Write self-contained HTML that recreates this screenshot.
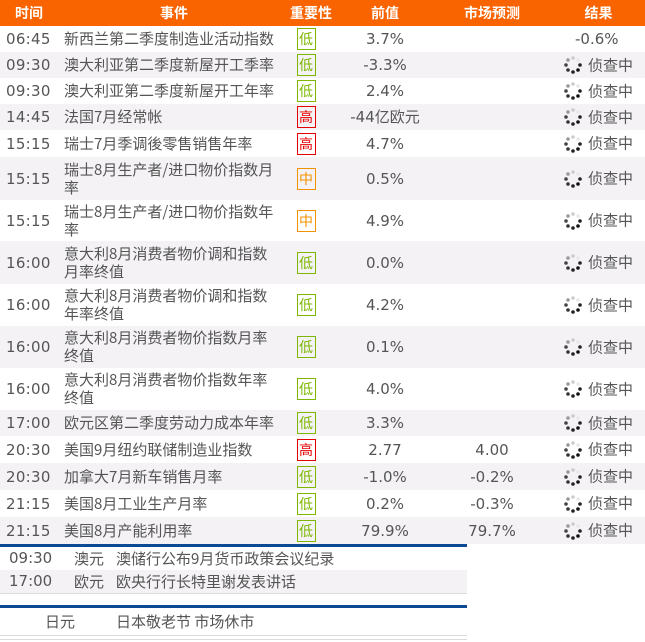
<!DOCTYPE html>
<html><head><meta charset="utf-8"><style>
body{margin:0;width:645px;height:642px;background:#fff;overflow:hidden;font-family:"DejaVu Sans","Liberation Sans","Noto Sans CJK SC",sans-serif;color:#555;}
table{border-collapse:collapse;table-layout:fixed;width:645px;}
td{padding:0;font-size:15px;line-height:18px;vertical-align:middle;overflow:hidden}
th{background:#f96300;color:#fff;font-weight:bold;font-size:14px;height:26px;line-height:26px;padding:0;white-space:nowrap;overflow:visible;font-family:"Noto Sans CJK SC",sans-serif;}
tr.g td{background:#f4f2f5;}
td.t{padding-left:6px;font-size:15px;letter-spacing:0.3px;white-space:nowrap}
td.e{padding-left:6px;padding-right:11px;font-family:"Noto Sans CJK SC",sans-serif;font-size:15px;line-height:18px}
td.i{text-align:center;}
td.p,td.f{text-align:center;white-space:nowrap}
td.r{padding-left:28px;white-space:nowrap}
.b{display:inline-block;width:17px;height:20px;line-height:20px;border:1px solid #7db700;color:#7db700;font-size:14px;text-align:center;font-family:"Noto Sans CJK SC",sans-serif;vertical-align:middle}
.b.h{border-color:#e60000;color:#e60000}
.b.m{border-color:#f39200;color:#f39200}
.sp{display:inline-block;vertical-align:middle;width:18px;height:18px;margin-right:6px}
.z{font-family:"Noto Sans CJK SC",sans-serif;font-size:15px;vertical-align:middle}
.lo{position:absolute;left:0;width:467px;font-size:15px;}
.lo div{height:23px;line-height:23px;position:relative}
.lo span{position:absolute;white-space:nowrap}
</style></head><body>
<svg width="0" height="0" style="position:absolute"><defs><g id="s">
<circle cx="9" cy="2" r="1.8" fill="#ccc"/><circle cx="14" cy="4" r="1.8" fill="#e8e8e8"/>
<circle cx="16" cy="9" r="1.8" fill="#222"/><circle cx="14" cy="14" r="1.8" fill="#111"/>
<circle cx="9" cy="16" r="1.8" fill="#222"/><circle cx="4" cy="14" r="1.8" fill="#333"/>
<circle cx="2" cy="9" r="1.8" fill="#444"/><circle cx="4" cy="4" r="1.8" fill="#999"/></g></defs></svg>
<table>
<colgroup><col style="width:58px"><col style="width:232px"><col style="width:32px"><col style="width:126px"><col style="width:88px"><col style="width:109px"></colgroup>
<tr style="height:26px"><th>时间</th><th>事件</th><th>重要性</th><th>前值</th><th>市场预测</th><th style="padding-left:16px">结果</th></tr>
<tr style="height:26px"><td class="t">06:45</td><td class="e">新西兰第二季度制造业活动指数</td><td class="i"><span class="b">低</span></td><td class="p">3.7%</td><td class="f"></td><td class="r" style="padding-left:39px">-0.6%</td></tr>
<tr class="g" style="height:26px"><td class="t">09:30</td><td class="e">澳大利亚第二季度新屋开工季率</td><td class="i"><span class="b">低</span></td><td class="p">-3.3%</td><td class="f"></td><td class="r"><svg class="sp"><use href="#s"/></svg><span class="z">侦查中</span></td></tr>
<tr style="height:26px"><td class="t">09:30</td><td class="e">澳大利亚第二季度新屋开工年率</td><td class="i"><span class="b">低</span></td><td class="p">2.4%</td><td class="f"></td><td class="r"><svg class="sp"><use href="#s"/></svg><span class="z">侦查中</span></td></tr>
<tr class="g" style="height:26px"><td class="t">14:45</td><td class="e">法国7月经常帐</td><td class="i"><span class="b h">高</span></td><td class="p">-44亿欧元</td><td class="f"></td><td class="r"><svg class="sp"><use href="#s"/></svg><span class="z">侦查中</span></td></tr>
<tr style="height:27px"><td class="t">15:15</td><td class="e">瑞士7月季调後零售销售年率</td><td class="i"><span class="b h">高</span></td><td class="p">4.7%</td><td class="f"></td><td class="r"><svg class="sp"><use href="#s"/></svg><span class="z">侦查中</span></td></tr>
<tr class="g" style="height:43px"><td class="t">15:15</td><td class="e">瑞士8月生产者/进口物价指数月率</td><td class="i"><span class="b m">中</span></td><td class="p">0.5%</td><td class="f"></td><td class="r"><svg class="sp"><use href="#s"/></svg><span class="z">侦查中</span></td></tr>
<tr style="height:41px"><td class="t">15:15</td><td class="e">瑞士8月生产者/进口物价指数年率</td><td class="i"><span class="b m">中</span></td><td class="p">4.9%</td><td class="f"></td><td class="r"><svg class="sp"><use href="#s"/></svg><span class="z">侦查中</span></td></tr>
<tr class="g" style="height:43px"><td class="t">16:00</td><td class="e">意大利8月消费者物价调和指数月率终值</td><td class="i"><span class="b">低</span></td><td class="p">0.0%</td><td class="f"></td><td class="r"><svg class="sp"><use href="#s"/></svg><span class="z">侦查中</span></td></tr>
<tr style="height:42px"><td class="t">16:00</td><td class="e">意大利8月消费者物价调和指数年率终值</td><td class="i"><span class="b">低</span></td><td class="p">4.2%</td><td class="f"></td><td class="r"><svg class="sp"><use href="#s"/></svg><span class="z">侦查中</span></td></tr>
<tr class="g" style="height:42px"><td class="t">16:00</td><td class="e">意大利8月消费者物价指数月率终值</td><td class="i"><span class="b">低</span></td><td class="p">0.1%</td><td class="f"></td><td class="r"><svg class="sp"><use href="#s"/></svg><span class="z">侦查中</span></td></tr>
<tr style="height:42px"><td class="t">16:00</td><td class="e">意大利8月消费者物价指数年率终值</td><td class="i"><span class="b">低</span></td><td class="p">4.0%</td><td class="f"></td><td class="r"><svg class="sp"><use href="#s"/></svg><span class="z">侦查中</span></td></tr>
<tr class="g" style="height:26px"><td class="t">17:00</td><td class="e">欧元区第二季度劳动力成本年率</td><td class="i"><span class="b">低</span></td><td class="p">3.3%</td><td class="f"></td><td class="r"><svg class="sp"><use href="#s"/></svg><span class="z">侦查中</span></td></tr>
<tr style="height:27px"><td class="t">20:30</td><td class="e">美国9月纽约联储制造业指数</td><td class="i"><span class="b h">高</span></td><td class="p">2.77</td><td class="f">4.00</td><td class="r"><svg class="sp"><use href="#s"/></svg><span class="z">侦查中</span></td></tr>
<tr class="g" style="height:27px"><td class="t">20:30</td><td class="e">加拿大7月新车销售月率</td><td class="i"><span class="b">低</span></td><td class="p">-1.0%</td><td class="f">-0.2%</td><td class="r"><svg class="sp"><use href="#s"/></svg><span class="z">侦查中</span></td></tr>
<tr style="height:27px"><td class="t">21:15</td><td class="e">美国8月工业生产月率</td><td class="i"><span class="b">低</span></td><td class="p">0.2%</td><td class="f">-0.3%</td><td class="r"><svg class="sp"><use href="#s"/></svg><span class="z">侦查中</span></td></tr>
<tr class="g" style="height:27px"><td class="t">21:15</td><td class="e">美国8月产能利用率</td><td class="i"><span class="b">低</span></td><td class="p">79.9%</td><td class="f">79.7%</td><td class="r"><svg class="sp"><use href="#s"/></svg><span class="z">侦查中</span></td></tr>
</table>
<div class="lo" style="top:544px;border-top:3px solid #0b4a96;border-bottom:1px solid #ddd">
<div><span style="left:9px">09:30</span><span style="left:74px" class="z">澳元</span><span style="left:116px" class="z">澳储行公布9月货币政策会议纪录</span></div>
<div style="background:#f4f2f5"><span style="left:9px">17:00</span><span style="left:74px" class="z">欧元</span><span style="left:116px" class="z">欧央行行长特里谢发表讲话</span></div>
</div>
<div class="lo" style="top:605px;border-top:3px solid #0b4a96;border-bottom:1px solid #ddd">
<div style="height:27px;line-height:27px"><span style="left:45px" class="z">日元</span><span style="left:116px" class="z">日本敬老节 市场休市</span></div>
</div>
<div style="position:absolute;left:0;top:639px;width:467px;border-top:1px solid #ddd"></div>
</body></html>
